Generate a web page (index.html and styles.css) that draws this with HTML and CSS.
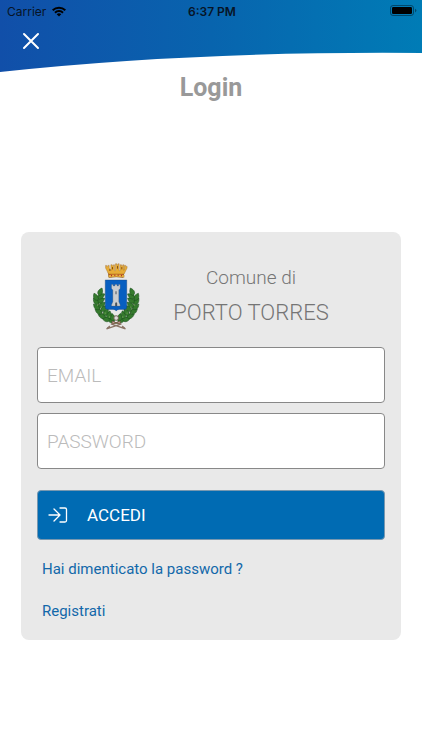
FILE: index.html
```html
<!DOCTYPE html>
<html lang="it">
<head>
  <meta charset="UTF-8">
  <meta name="viewport" content="width=device-width, initial-scale=1.0">
  <title>Login</title>
  <link rel="stylesheet" href="styles.css">
</head>
<body>
  <header class="header">
    <svg class="header-shape" viewBox="0 0 422 72" preserveAspectRatio="none" aria-hidden="true">
      <defs>
        <linearGradient id="blue" x1="0" x2="1" y1="0" y2="0">
          <stop offset="0" stop-color="#114fa9"/>
          <stop offset="0.5" stop-color="#0864ae"/>
          <stop offset="1" stop-color="#007cb6"/>
        </linearGradient>
      </defs>
      <path d="M0 0H422V53Q195 51 0 72Z" fill="url(#blue)"/>
    </svg>
    <div class="status-bar">
      <div class="carrier">
        <span>Carrier</span>
        <svg width="14" height="11" viewBox="0 0 14 11" aria-hidden="true">
          <path d="M0 3.6A10 10 0 0 1 14 3.6L12.6 5A8 8 0 0 0 1.4 5Z"/>
          <path d="M2.3 6A6.7 6.7 0 0 1 11.7 6L10.3 7.4A4.7 4.7 0 0 0 3.7 7.4Z"/>
          <path d="M4.7 8.3A3.3 3.3 0 0 1 9.3 8.3L7 10.6Z"/>
        </svg>
      </div>
      <span class="time">6:37 PM</span>
      <div class="battery">
        <svg width="27" height="12" viewBox="0 0 27 12" aria-hidden="true">
          <rect x="0.5" y="0.5" width="23" height="10" rx="2.5" fill="none" stroke="#000" stroke-opacity="0.4"/>
          <rect x="2" y="2" width="20" height="7" rx="1.2"/>
          <path d="M25 3.8Q26.4 4.4 26.4 5.6T25 7.4Z" fill-opacity="0.4"/>
        </svg>
      </div>
    </div>
    <button class="close" type="button" aria-label="Chiudi">
      <svg width="18" height="18" viewBox="0 0 18 18" aria-hidden="true">
        <path d="M2 2L16 16M16 2L2 16" fill="none" stroke="#fff" stroke-width="2" stroke-linecap="round"/>
      </svg>
    </button>
  </header>

  <main>
    <h1>Login</h1>
    <form class="card">
      <div class="brand">
        <svg class="crest" width="49" height="69" viewBox="36 36 148 208" aria-hidden="true">
          <defs>
            <path id="leaf" d="M0 0C3 -10 14 -11 24 0C14 8 4 8 0 0Z"/>
            <g id="branch">
              <path d="M121 220Q77 212 61 181Q49 157 58 130" fill="none" stroke="#52652c" stroke-width="3"/>
              <g fill="#357a2d" stroke="#174d1b" stroke-width="1.5">
                <use href="#leaf" transform="translate(104 212) rotate(200)"/>
                <use href="#leaf" transform="translate(102 211) rotate(255)"/>
                <use href="#leaf" transform="translate(90 207) rotate(190)"/>
                <use href="#leaf" transform="translate(86 204) rotate(280)"/>
                <use href="#leaf" transform="translate(77 199) rotate(200)"/>
                <use href="#leaf" transform="translate(73 195) rotate(300)"/>
                <use href="#leaf" transform="translate(66 187) rotate(210)"/>
                <use href="#leaf" transform="translate(64 182) rotate(315)"/>
                <use href="#leaf" transform="translate(59 175) rotate(220)"/>
                <use href="#leaf" transform="translate(58 170) rotate(320)"/>
                <use href="#leaf" transform="translate(56 160) rotate(230)"/>
                <use href="#leaf" transform="translate(55 156) rotate(325)"/>
                <use href="#leaf" transform="translate(54 148) rotate(240)"/>
                <use href="#leaf" transform="translate(55 143) rotate(325)"/>
                <use href="#leaf" transform="translate(58 134) rotate(290)"/>
              </g>
              <g fill="#78a65c">
                <circle cx="65" cy="169" r="2"/>
                <circle cx="76" cy="187" r="2"/>
                <circle cx="53" cy="163" r="2"/>
                <circle cx="89" cy="199" r="2"/>
              </g>
            </g>
          </defs>
          <use href="#branch"/>
          <use href="#branch" transform="matrix(-1 0 0 1 218 0)"/>
          <!-- ribbon -->
          <path d="M125 220L80 235L90 226M93 220L137 235L127 226" fill="none" stroke="#8a7465" stroke-width="4"/>
          <path d="M109 217L97 211V220L109 216L121 220V211Z" fill="#c8a79b" stroke="#764e43" stroke-width="2"/>
          <circle cx="109" cy="202" r="7" fill="#ddd" stroke="#746557" stroke-width="3"/>
          <!-- shield -->
          <path d="M76 87H141V170Q141 176 134 176H118Q111 176 109 181Q107 176 100 176H83Q76 176 76 170Z" fill="#075fc1" stroke="#163965" stroke-width="1"/>
          <path d="M95 101H100V105H105V101H112V105H116V101H121V113L117 117V153L121 162V166H95V162L99 153V117L95 113Z" fill="#c9cdd0" stroke="#555d65" stroke-width="1"/>
          <path d="M107 121H110V130H107ZM106 166V157Q109 151 112 157V166Z" fill="#49525a"/>
          <!-- crown -->
          <path d="M85 63L132 63L130 79Q109 75 88 79Z" fill="#c84624" stroke="#7b4f12" stroke-width="2"/>
          <path d="M77 43H80V46H84V43H88V50L93 59V41H97V44H101V41H104V59H107V38H111V41H115V38H118V59H121V41H125V44H129V41H132V58L134 51V43H138V46H142V51L133 69H86L77 51Z" fill="#e7ad37" stroke="#955a12" stroke-width="1"/>
          <path d="M86 72Q109 68 133 72V79Q109 75 86 79Z" fill="#edba45" stroke="#955a12" stroke-width="1"/>
          <path d="M95 72V76M105 71V75M115 71V75M125 72V76" stroke="#b22e22" stroke-width="3"/>
          <path d="M90 54V60M98 48V55M113 45V53M126 48V55" stroke="#855013" stroke-width="3"/>
        </svg>
        <div class="city">
          <span>Comune di</span>
          <strong>PORTO TORRES</strong>
        </div>
      </div>

      <input class="field" type="email" name="email" placeholder="EMAIL" aria-label="Email">
      <input class="field" type="password" name="password" placeholder="PASSWORD" aria-label="Password">

      <button class="submit" type="submit">
        <svg width="20" height="16" viewBox="0 0 20 16" aria-hidden="true">
          <path d="M1 8H12M6 2L12 8L6 14M12 1H17Q18.500 1 18.500 2.500V13.500Q18.500 15 17 15H12" fill="none" stroke="#fff" stroke-width="1.300" stroke-linecap="round" stroke-linejoin="round"/>
        </svg>
        <span>ACCEDI</span>
      </button>
      <nav class="links">
        <a href="#">Hai dimenticato la password ?</a>
        <a href="#">Registrati</a>
      </nav>
    </form>
  </main>
</body>
</html>
```
FILE: styles.css
```css
* {
  box-sizing: border-box;
}
body {
  margin: 0;
  background-color: #fff;
  color: #757575;
  font-family: Roboto, "Liberation Sans", sans-serif;
}
.header {
  position: relative;
  height: 72px;
}
.header-shape {
  position: absolute;
  top: 0;
  left: 0;
  width: 100%;
  height: 100%;
  z-index: -1;
}
.status-bar {
  display: grid;
  grid-template-columns: 1fr auto 1fr;
  align-items: center;
  height: 22px;
  padding: 0 5px 0 7px;
  color: #071426;
  font-family: Inter, "Liberation Sans", sans-serif;
  font-size: 12px;
}
.carrier {
  display: flex;
  align-items: center;
  gap: 6px;
}
.time {
  font-weight: 600;
}
.battery {
  display: flex;
  justify-content: flex-end;
}
.close {
  display: flex;
  margin-left: 14px;
  padding: 10px 8px;
  border: none;
  background: none;
  cursor: pointer;
}
h1 {
  margin: 0;
  color: #999;
  font-size: 25px;
  line-height: 32px;
  text-align: center;
}
.card {
  display: flex;
  flex-direction: column;
  margin: 128px 21px 40px;
  padding: 16px;
  border-radius: 8px;
  background-color: #e9e9e9;
}
.brand {
  display: flex;
  align-items: center;
  height: 99px;
  padding: 0 55px;
}
.crest {
  flex: none;
}
.city {
  flex: 1;
  display: flex;
  flex-direction: column;
  align-items: center;
  margin-left: 31px;
  padding-bottom: 6px;
  white-space: nowrap;
  font-size: 19px;
  font-weight: 300;
  line-height: 35px;
}
.city strong {
  font-size: 22px;
  font-weight: 300;
}
.field {
  width: 100%;
  height: 56px;
  margin-bottom: 10px;
  padding: 0 9px;
  border: 1px solid #888;
  border-radius: 4px;
  background-color: #fff;
  color: #555;
  font-family: inherit;
  font-size: 19px;
  font-weight: 300;
}
.field::placeholder {
  color: #bbb;
  opacity: 1;
}
.submit {
  display: flex;
  align-items: center;
  gap: 19px;
  height: 50px;
  margin-top: 11px;
  padding: 0 10px;
  border: 1px solid #7898b0;
  border-radius: 4px;
  background-color: #006bb3;
  color: #fff;
  font-family: inherit;
  font-size: 17px;
  cursor: pointer;
}
.links {
  display: flex;
  flex-direction: column;
  align-items: flex-start;
  gap: 18px;
  padding: 17px 5px 1px;
}
.links a {
  color: #1268aa;
  font-size: 15px;
  line-height: 24px;
  text-decoration: none;
}
```
